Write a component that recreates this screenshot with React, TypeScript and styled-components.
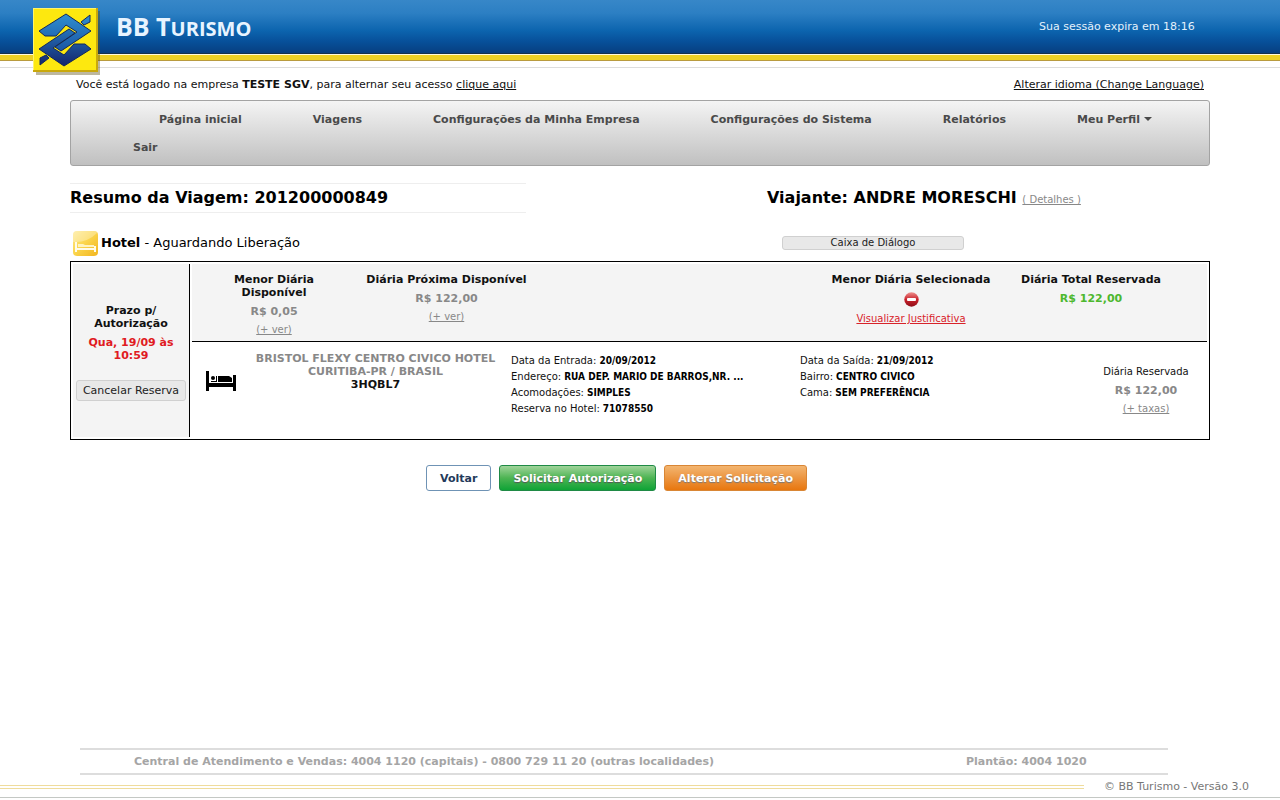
import React from "react";
import styled, { createGlobalStyle, css } from "styled-components";

const wide = '"DejaVu Sans", Verdana, sans-serif';
const narrow = '"DejaVu Sans Condensed", "DejaVu Sans", Tahoma, sans-serif';

const GlobalStyle = createGlobalStyle`
  * { box-sizing: border-box; }
  body {
    margin: 0;
    background: #fff;
    color: #111;
    font: 11px/13px ${wide};
  }
  h1, h2, h3, p, ul, dl, dd { margin: 0; padding: 0; }
  a { color: inherit; }
`;

const Page = styled.div`
  min-height: 100vh;
  display: flex;
  flex-direction: column;
`;

const Header = styled.header`
  border-bottom: 1px solid #ddd;
  padding-bottom: 6px;
`;

const Banner = styled.div`
  height: 54px;
  padding: 0 78px 0 33px;
  display: flex;
  align-items: center;
  justify-content: space-between;
  color: #e4f1fc;
  background: linear-gradient(#3787c8 0%, #2c7fc3 25%, #0c64ae 58%, #07509a 78%, #073f80 100%);
  border-bottom: 1px solid #16304a;
`;

const Session = styled.span`
  min-width: 163px;
`;

const Stripe = styled.div`
  height: 7px;
  background: #edd025;
  border-top: 1px solid #fffbe0;
  border-bottom: 1px solid #b99b3e;
`;

const Brand = styled.a`
  display: flex;
  align-items: flex-start;
  height: 54px;
  gap: 15px;
  color: #e8f4ff;
  text-decoration: none;
`;

const LogoMark = styled.svg`
  position: relative;
  flex: none;
  margin-top: 8px;
`;

const BrandName = styled.span`
  margin-top: 12px;
  font: bold 25px/28px "Open Sans", "Noto Sans", sans-serif;
  small { font-size: 20px; }
`;

const Shell = styled.main`
  flex: 1;
  margin: 0 70px;
`;

const Notice = styled.div`
  height: 32px;
  padding: 10px 6px 0;
  display: flex;
  justify-content: space-between;
`;

const Nav = styled.nav`
  border: 1px solid #a3a3a3;
  border-radius: 3px;
  background: linear-gradient(#f4f4f4, #c0c0c0);
`;

const Menu = styled.ul`
  list-style: none;
  display: flex;
  flex-wrap: wrap;
  column-gap: 71px;
  padding: 4px 36px 4px 62px;
`;

const MenuItem = styled.li`
  &:first-child { margin-left: 26px; }
  a {
    display: flex;
    align-items: center;
    gap: 4px;
    height: 28px;
    font-weight: bold;
    color: #4a4a4a;
    text-decoration: none;
  }
`;

const Caret = styled.i`
  border: 4px solid transparent;
  border-top-color: #4a4a4a;
  border-bottom: 0;
`;

const Titles = styled.div`
  margin-top: 17px;
  display: grid;
  grid-template-columns: 40% 1fr;
  column-gap: 241px;
  align-items: center;
`;

const Heading = styled.h1<{ $ruled?: boolean }>`
  font: bold 16px/28px ${wide};
  color: #000;
  white-space: nowrap;
  ${(p) => p.$ruled && css`
    border-top: 1px solid #eee;
    border-bottom: 1px solid #eee;
  `}
`;

const SmallLink = styled.a<{ $tone?: string }>`
  font: 10px/13px ${wide};
  color: ${(p) => p.$tone || "#888"};
`;

const SectionBar = styled.div`
  height: 48px;
  padding: 17px 246px 5px 3px;
  display: flex;
  align-items: center;
  justify-content: space-between;
`;

const SectionTitle = styled.h2`
  display: flex;
  align-items: center;
  gap: 3px;
  font: 13px/16px ${wide};
  color: #000;
`;

const GrayButton = styled.button<{ $thin?: boolean }>`
  border: 1px solid #d0d0d0;
  border-radius: 3px;
  background: #e8e8e8;
  color: #222;
  padding: 0;
  font: ${(p) => (p.$thin ? "10px/12px" : "11px/13px")} ${wide};
  height: ${(p) => (p.$thin ? "14px" : "21px")};
  width: ${(p) => (p.$thin ? "182px" : "110px")};
  white-space: nowrap;
`;

const Card = styled.section`
  border: 1px solid #000;
  padding: 2px;
  display: grid;
  grid-template-columns: 117px 1fr;
  column-gap: 2px;
`;

const Deadline = styled.div`
  border-right: 1px solid #000;
  background: #f4f4f4;
  display: flex;
  flex-direction: column;
  align-items: center;
  padding-top: 40px;
  text-align: center;
`;

const Strong = styled.p<{ $tone?: string; $gap?: number }>`
  font-weight: bold;
  color: ${(p) => p.$tone || "#111"};
  margin-top: ${(p) => p.$gap || 0}px;
`;

const CancelSlot = styled.div`
  margin-top: 18px;
`;

const Rates = styled.div`
  min-height: 78px;
  padding: 9px 26px 4px 0;
  display: grid;
  grid-template-columns: 164px 181px 1fr 180px 180px;
  background: #f4f4f4;
  border-bottom: 1px solid #000;
`;

const Rate = styled.div`
  display: flex;
  flex-direction: column;
  align-items: center;
  gap: 5px;
  text-align: center;
  h3 {
    margin-bottom: 1px;
    font: bold 11px/13px ${wide};
  }
`;

const ReservedRate = styled(Rate)`
  padding-top: 23px;
  small {
    margin-bottom: 1px;
    font: 10px/13px ${wide};
  }
`;

const Narrow = styled.span`
  display: block;
  max-width: 100px;
`;

const Stay = styled.div`
  min-height: 95px;
  display: grid;
  grid-template-columns: 58px 251px 289fr 295fr 122px;
  padding-bottom: 20px;
`;

const BedCell = styled.div`
  padding: 29px 14px 0;
`;

const HotelName = styled.div`
  padding-top: 10px;
  text-align: center;
  white-space: nowrap;
`;

const Details = styled.dl`
  padding: 11px 0 0 10px;
  font: 10px/16px ${wide};
  div { display: flex; gap: 3px; }
  dd { font: bold 10px/16px ${narrow}; color: #000; }
`;

const Actions = styled.div`
  display: flex;
  justify-content: center;
  gap: 8px;
  margin: 25px 47px 0 0;
`;

const tones = {
  plain: "border-color:#6f93b5;background:#fff;color:#243a5a;",
  green: "border-color:#1f8a45;background:linear-gradient(#a0d49a,#4db453 50%,#0fa336);color:#fff;text-shadow:0 1px 1px #555;",
  orange: "border-color:#d98635;background:linear-gradient(#f3b570,#ec9540 50%,#e8770f);color:#fff;text-shadow:0 1px 1px #777;",
};

const ActionButton = styled.button<{ $tone: keyof typeof tones }>`
  height: 26px;
  padding: 0 13px;
  border: 1px solid;
  border-radius: 3px;
  font: bold 11px/13px ${wide};
  ${(p) => tones[p.$tone]}
`;

const Footer = styled.footer`
  border-bottom: 1px solid #c4c8c4;
  margin-bottom: 2px;
`;

const Contacts = styled.div`
  margin: 0 112px 0 80px;
  padding: 0 77px 0 54px;
  height: 27px;
  display: flex;
  align-items: center;
  justify-content: space-between;
  border: solid #ddd;
  border-width: 2px 0;
  color: #a5a5a5;
  font-weight: bold;
`;

const OnCall = styled.span`
  min-width: 125px;
`;

const Copyright = styled.div`
  height: 22px;
  padding-right: 20px;
  display: flex;
  align-items: center;
  gap: 20px;
  color: #777;
  span { min-width: 156px; }
`;

const GoldRule = styled.hr`
  flex: 1;
  height: 4px;
  margin: 2px 0 0;
  border: solid #efdc9c;
  border-width: 1px 0;
`;

function Logo() {
  const half = (
    <>
      <path d="M6 23 L33 6 L58 23 L28 43 L22 39 L44 24 L33 17 L23 28 L12 28 Z" />
      <path d="M48 14 L57 7 L57 14 L51 17 Z" />
    </>
  );
  return (
    <LogoMark width="68" height="68" viewBox="0 0 68 68" aria-hidden="true">
      <defs>
        <linearGradient id="inkTop" gradientUnits="userSpaceOnUse" x1="0" y1="6" x2="0" y2="43">
          <stop offset="0" stopColor="#2f8fd0" />
          <stop offset="1" stopColor="#1a55a4" />
        </linearGradient>
        <linearGradient id="inkBottom" gradientUnits="userSpaceOnUse" x1="0" y1="6" x2="0" y2="43">
          <stop offset="0" stopColor="#14246c" />
          <stop offset="1" stopColor="#2474bb" />
        </linearGradient>
      </defs>
      <rect x="3" y="3" width="64" height="64" fill="#5a4a10" opacity=".4" />
      <rect width="65" height="64" fill="#c9a80c" />
      <rect width="63" height="62" fill="#fff36a" />
      <rect x="1" y="1" width="62" height="61" fill="#fde80f" />
      <g fill="url(#inkBottom)" stroke="#12285a" strokeWidth="1" transform="rotate(180 32 32)">
        {half}
      </g>
      <g fill="url(#inkTop)" stroke="#12285a" strokeWidth="1">
        {half}
      </g>
    </LogoMark>
  );
}

function BedIcon() {
  return (
    <svg width="30" height="20" viewBox="0 0 30 20" aria-hidden="true">
      <path d="M0 0h3v12h24V4h3v16h-3v-4H3v4H0z" />
      <circle cx="7" cy="7" r="2" />
      <path d="M5 10h5V5h1v6H5zM12 5h11l3 2v4H12z" />
    </svg>
  );
}

function HotelIcon() {
  return (
    <svg width="25" height="25" viewBox="0 0 25 25" aria-hidden="true">
      <defs>
        <linearGradient id="gold" x1="0" y1="0" x2="1" y2="1">
          <stop offset="0" stopColor="#ffe98e" />
          <stop offset=".45" stopColor="#fbd64e" />
          <stop offset="1" stopColor="#f2b51e" />
        </linearGradient>
      </defs>
      <rect width="25" height="25" rx="4" fill="url(#gold)" />
      <path d="M0 11Q14 12 24 2V4Q25 0 21 0H4Q0 0 0 4Z" fill="#fff" opacity=".3" />
      <path d="M3 11v10M3 18h19M22 15v6" stroke="#fffbe8" strokeWidth="2" fill="none" />
      <path d="M5 13h5l2 1h9v2H5z" fill="#fff3c0" />
    </svg>
  );
}

function DeniedIcon() {
  return (
    <svg width="15" height="15" viewBox="0 0 15 15" role="img" aria-label="Não">
      <defs>
        <linearGradient id="red" x1="0" y1="0" x2="0" y2="1">
          <stop offset="0" stopColor="#ee8f8c" />
          <stop offset=".5" stopColor="#c9222b" />
          <stop offset="1" stopColor="#8f0d18" />
        </linearGradient>
      </defs>
      <circle cx="7.5" cy="7.5" r="7.2" fill="url(#red)" />
      <rect x="3" y="6" width="9" height="3" rx="1" fill="#fff" />
    </svg>
  );
}

const menu = [
  "Página inicial",
  "Viagens",
  "Configurações da Minha Empresa",
  "Configurações do Sistema",
  "Relatórios",
  "Meu Perfil",
  "Sair",
];

const arrival = [
  ["Data da Entrada:", "20/09/2012"],
  ["Endereço:", "RUA DEP. MARIO DE BARROS,NR. ..."],
  ["Acomodações:", "SIMPLES"],
  ["Reserva no Hotel:", "71078550"],
];

const departure = [
  ["Data da Saída:", "21/09/2012"],
  ["Bairro:", "CENTRO CIVICO"],
  ["Cama:", "SEM PREFERÊNCIA"],
];

function DetailList({ items }: { items: string[][] }) {
  return (
    <Details>
      {items.map(([label, value]) => (
        <div key={label}>
          <dt>{label}</dt>
          <dd>{value}</dd>
        </div>
      ))}
    </Details>
  );
}

export default function App() {
  return (
    <Page>
      <GlobalStyle />
      <Header>
        <Banner>
          <Brand href="#">
            <Logo />
            <BrandName>BB T<small>URISMO</small></BrandName>
          </Brand>
          <Session>Sua sessão expira em 18:16</Session>
        </Banner>
        <Stripe />
      </Header>

      <Shell>
        <Notice>
          <span>
            Você está logado na empresa <b>TESTE SGV</b>, para alternar seu acesso <a href="#">clique aqui</a>
          </span>
          <a href="#">Alterar idioma (Change Language)</a>
        </Notice>

        <Nav>
          <Menu>
            {menu.map((label) => (
              <MenuItem key={label}>
                <a href="#">
                  {label}
                  {label === "Meu Perfil" && <Caret />}
                </a>
              </MenuItem>
            ))}
          </Menu>
        </Nav>

        <Titles>
          <Heading $ruled>Resumo da Viagem: 201200000849</Heading>
          <Heading as="h2">
            Viajante: ANDRE MORESCHI <SmallLink href="#">( Detalhes )</SmallLink>
          </Heading>
        </Titles>

        <SectionBar>
          <SectionTitle>
            <HotelIcon />
            <span><b>Hotel</b> - Aguardando Liberação</span>
          </SectionTitle>
          <GrayButton $thin>Caixa de Diálogo</GrayButton>
        </SectionBar>

        <Card>
          <Deadline>
            <Strong>Prazo p/<br />Autorização</Strong>
            <Strong $tone="#e01b22" $gap={6}>Qua, 19/09 às<br />10:59</Strong>
            <CancelSlot><GrayButton>Cancelar Reserva</GrayButton></CancelSlot>
          </Deadline>
          <div>
            <Rates>
              <Rate>
                <h3><Narrow>Menor Diária Disponível</Narrow></h3>
                <Strong $tone="#888">R$ 0,05</Strong>
                <SmallLink href="#">(+ ver)</SmallLink>
              </Rate>
              <Rate>
                <h3>Diária Próxima Disponível</h3>
                <Strong $tone="#888">R$ 122,00</Strong>
                <SmallLink href="#">(+ ver)</SmallLink>
              </Rate>
              <span />
              <Rate>
                <h3>Menor Diária Selecionada</h3>
                <DeniedIcon />
                <SmallLink href="#" $tone="#d8232a">Visualizar Justificativa</SmallLink>
              </Rate>
              <Rate>
                <h3>Diária Total Reservada</h3>
                <Strong $tone="#4db82e">R$ 122,00</Strong>
              </Rate>
            </Rates>
            <Stay>
              <BedCell><BedIcon /></BedCell>
              <HotelName>
                <Strong $tone="#888">BRISTOL FLEXY CENTRO CIVICO HOTEL<br />CURITIBA-PR / BRASIL</Strong>
                <Strong>3HQBL7</Strong>
              </HotelName>
              <DetailList items={arrival} />
              <DetailList items={departure} />
              <ReservedRate>
                <small>Diária Reservada</small>
                <Strong $tone="#888">R$ 122,00</Strong>
                <SmallLink href="#">(+ taxas)</SmallLink>
              </ReservedRate>
            </Stay>
          </div>
        </Card>

        <Actions>
          <ActionButton $tone="plain">Voltar</ActionButton>
          <ActionButton $tone="green">Solicitar Autorização</ActionButton>
          <ActionButton $tone="orange">Alterar Solicitação</ActionButton>
        </Actions>
      </Shell>

      <Footer>
        <Contacts>
          <span>Central de Atendimento e Vendas: 4004 1120 (capitais) - 0800 729 11 20 (outras localidades)</span>
          <OnCall>Plantão: 4004 1020</OnCall>
        </Contacts>
        <Copyright>
          <GoldRule />
          <span>© BB Turismo - Versão 3.0</span>
        </Copyright>
      </Footer>
    </Page>
  );
}
